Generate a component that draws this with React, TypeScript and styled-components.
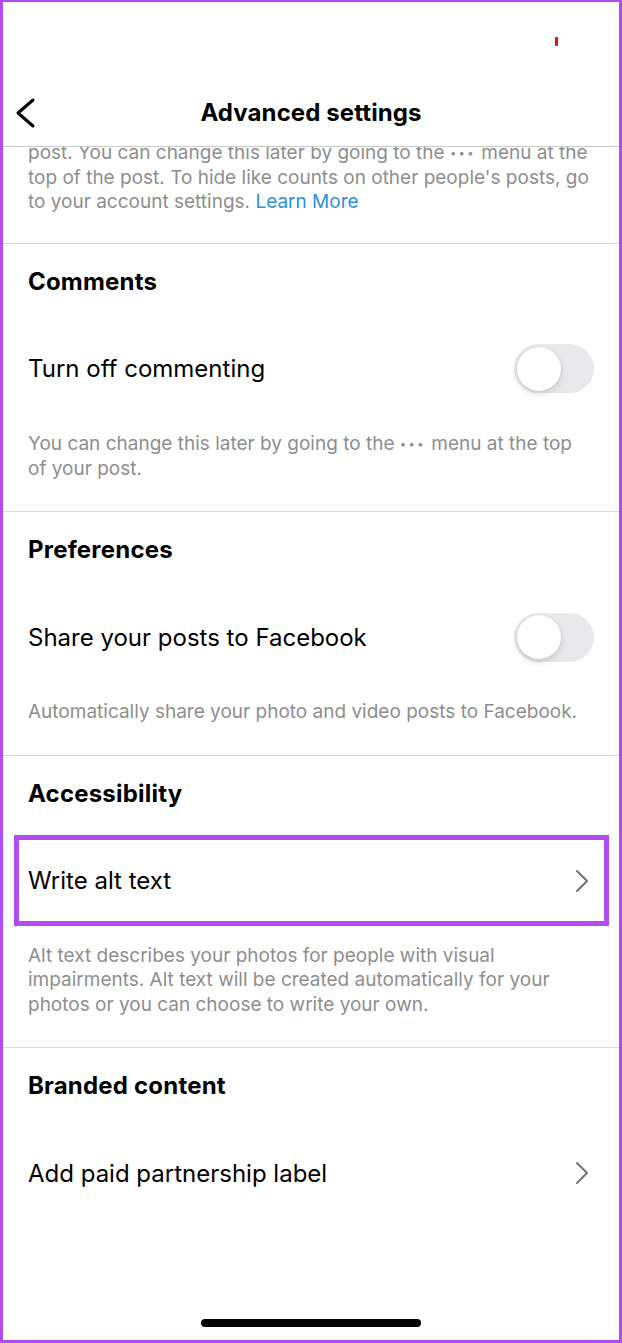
import React from 'react';
import styled, { createGlobalStyle } from 'styled-components';

const GlobalStyle = createGlobalStyle`
  * { box-sizing: border-box; }
  html, body { margin: 0; padding: 0; background: #fff; }
  body {
    font-family: Inter, "Noto Sans", "Liberation Sans", sans-serif;
    -webkit-font-smoothing: antialiased;
  }
`;

const Screen = styled.div`
  width: 622px;
  height: 1343px;
  display: flex;
  flex-direction: column;
  border: 3px solid #b04cf2;
  border-top-width: 2px;
  background: #fff;
  overflow: hidden;
`;

const StatusBar = styled.div`
  height: 78px;
  display: flex;
  justify-content: flex-end;
  align-items: flex-start;
  padding: 35px 61px 0 0;
`;

const RecordMark = styled.span`
  width: 3px;
  height: 9px;
  border-radius: 1px;
  background: #d4171c;
`;

const NavBar = styled.header`
  height: 67px;
  display: grid;
  grid-template-columns: 70px 1fr 70px;
  align-items: center;
  border-bottom: 1px solid #c9c9c9;
  background: #fff;
  position: relative;
  z-index: 1;
`;

const BackButton = styled.button`
  border: none;
  background: none;
  padding: 0 0 0 12px;
  display: flex;
  align-items: center;
  cursor: pointer;
`;

const Title = styled.h1`
  margin: 0;
  text-align: center;
  font-size: 24px;
  line-height: 28px;
  font-weight: 700;
  letter-spacing: 0.1px;
  color: #000;
`;

const ScrollArea = styled.main`
  flex: 1;
  min-height: 0;
  overflow: hidden;
`;

// the list is scrolled a little, so the first paragraph sits under the bar
const ScrollContent = styled.div`
  margin-top: -6px;
`;

const Description = styled.p<{ $top?: number; $bottom?: number }>`
  margin: ${({ $top = 20 }) => $top}px 0 0;
  padding: 0 25px ${({ $bottom = 30 }) => $bottom}px;
  font-size: 19px;
  line-height: 24.5px;
  color: #8e8e8e;
`;

const Dots = styled.span`
  font-size: 0.6em;
  letter-spacing: 0.2em;
  vertical-align: 0.15em;
`;

const Link = styled.a`
  color: #2f8de4;
  text-decoration: none;
`;

const Section = styled.section`
  border-top: 1px solid #dbdbdb;
`;

const Heading = styled.h2`
  margin: 0;
  padding: 24px 25px 0;
  font-size: 24px;
  line-height: 28px;
  font-weight: 700;
  letter-spacing: 0.2px;
  color: #000;
`;

const Row = styled.div<{ $highlight?: boolean }>`
  position: relative;
  height: 86px;
  margin-top: 30px;
  padding: 0 25px;
  display: flex;
  align-items: center;
  justify-content: space-between;
  font-size: 24px;
  color: #000;

  ${({ $highlight }) =>
    $highlight &&
    `
    &::after {
      content: '';
      position: absolute;
      top: -3px;
      bottom: -2px;
      left: 11px;
      right: 10px;
      border: 5px solid #b04cf2;
      pointer-events: none;
    }
  `}
`;

const Track = styled.div<{ $on?: boolean }>`
  width: 80px;
  height: 49px;
  border-radius: 25px;
  padding: 2.5px;
  display: flex;
  align-items: center;
  background: ${({ $on }) => ($on ? '#34c759' : '#e9e9eb')};
  justify-content: ${({ $on }) => ($on ? 'flex-end' : 'flex-start')};
`;

const Knob = styled.div`
  width: 44px;
  height: 44px;
  border-radius: 50%;
  background: #fff;
  box-shadow: 0 3px 7px rgba(0, 0, 0, 0.14), 0 0 0 0.5px rgba(0, 0, 0, 0.05);
`;

const ChevronBox = styled.span`
  display: flex;
  margin-right: 5px;
`;

const HomeArea = styled.div`
  display: flex;
  justify-content: center;
  padding-bottom: 13px;
`;

const HomeIndicator = styled.div`
  width: 220px;
  height: 8px;
  border-radius: 4px;
  background: #000;
`;

const Toggle = ({ on = false }: { on?: boolean }) => (
  <Track $on={on}>
    <Knob />
  </Track>
);

const Chevron = () => (
  <ChevronBox>
    <svg width="14" height="24" viewBox="0 0 14 24" fill="none">
      <polyline points="2,2 12,12 2,22" stroke="#737373" strokeWidth="2" strokeLinecap="round" strokeLinejoin="round" />
    </svg>
  </ChevronBox>
);

export default function App() {
  return (
    <>
      <GlobalStyle />
      <Screen>
        <StatusBar>
          <RecordMark />
        </StatusBar>
        <NavBar>
          <BackButton aria-label="Back">
            <svg width="22" height="32" viewBox="0 0 22 32" fill="none">
              <polyline points="18,3 3,16 18,29" stroke="#000" strokeWidth="3" strokeLinecap="round" strokeLinejoin="round" />
            </svg>
          </BackButton>
          <Title>Advanced settings</Title>
          <span />
        </NavBar>

        <ScrollArea>
          <ScrollContent>
            <Description $top={0} $bottom={28}>
              post. You can change this later by going to the <Dots>•••</Dots> menu at the
              <br />
              top of the post. To hide like counts on other people's posts, go
              <br />
              to your account settings. <Link>Learn More</Link>
            </Description>

            <Section>
              <Heading>Comments</Heading>
              <Row>
                Turn off commenting
                <Toggle />
              </Row>
              <Description>
                You can change this later by going to the <Dots>•••</Dots> menu at the top
                <br />
                of your post.
              </Description>
            </Section>

            <Section>
              <Heading>Preferences</Heading>
              <Row>
                Share your posts to Facebook
                <Toggle />
              </Row>
              <Description>Automatically share your photo and video posts to Facebook.</Description>
            </Section>

            <Section>
              <Heading>Accessibility</Heading>
              <Row $highlight>
                Write alt text
                <Chevron />
              </Row>
              <Description>
                Alt text describes your photos for people with visual
                <br />
                impairments. Alt text will be created automatically for your
                <br />
                photos or you can choose to write your own.
              </Description>
            </Section>

            <Section>
              <Heading>Branded content</Heading>
              <Row>
                Add paid partnership label
                <Chevron />
              </Row>
            </Section>
          </ScrollContent>
        </ScrollArea>

        <HomeArea>
          <HomeIndicator />
        </HomeArea>
      </Screen>
    </>
  );
}
